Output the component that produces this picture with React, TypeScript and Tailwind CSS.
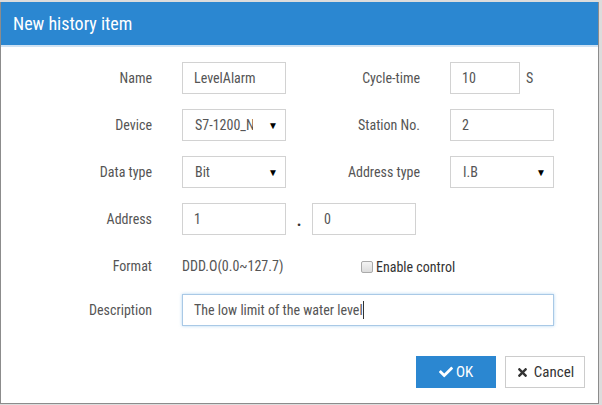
import {FaCheck, FaTimes} from 'react-icons/fa'

const font = "font-['Roboto_Condensed','Roboto','Liberation_Sans',sans-serif]"

function Label({children, w = 'w-[151px]'}: { children: string, w?: string }) {
  return <div className={`${w} shrink-0 text-right text-[14px] text-[#555]`}>{children}</div>
}

function Field({value, w = 'w-[104px]', focused = false}: { value: string, w?: string, focused?: boolean }) {
  return (
    <div className={`${w} h-[32px] shrink-0 flex items-center px-[11px] text-[14px] text-[#555] bg-white border ${focused ? 'border-[#a9c9e6] shadow-[0_0_3px_rgba(102,175,233,0.5)]' : 'border-[#d2d2d2]'}`}>
      {value}
      {focused && <span className="w-px h-[18px] bg-[#333]"/>}
    </div>
  )
}

function Select({value, w = 'w-[104px]'}: { value: string, w?: string }) {
  return (
    <div className={`${w} h-[32px] shrink-0 flex items-center pl-[12px] pr-[7px] text-[14px] text-[#555] bg-white border border-[#d2d2d2]`}>
      <span className="w-[58px] overflow-hidden whitespace-nowrap">{value}</span>
      <span className="flex-1"/>
      <span className="text-[10px] text-black">▼</span>
    </div>
  )
}

export default function App() {
  return (
    <div className={`w-[602px] h-[405px] bg-[#dcdcdc] pt-[2px] ${font}`}>
      <div className="w-[599px] h-[402px] bg-white border border-t-0 border-[#8c8c8c] flex flex-col">
        <div className="h-[43px] bg-[#2b87d1] flex items-center px-[12px] text-[18px] text-white">New history item</div>
        <div className="h-[2px] bg-[#cfe2f3]"/>

        <div className="flex flex-col pt-[15px]">
          <div className="flex items-center h-[32px]">
            <Label>Name</Label>
            <div className="ml-[30px]"><Field value="LevelAlarm"/></div>
            <Label w="w-[134px]">Cycle-time</Label>
            <div className="ml-[30px]"><Field value="10" w="w-[70px]"/></div>
            <span className="ml-[6px] text-[14px] text-[#555]">S</span>
          </div>

          <div className="flex items-center h-[32px] mt-[15px]">
            <Label>Device</Label>
            <div className="ml-[30px]"><Select value="S7-1200_N"/></div>
            <Label w="w-[134px]">Station No.</Label>
            <div className="ml-[30px]"><Field value="2"/></div>
          </div>

          <div className="flex items-center h-[32px] mt-[15px]">
            <Label>Data type</Label>
            <div className="ml-[30px]"><Select value="Bit"/></div>
            <Label w="w-[134px]">Address type</Label>
            <div className="ml-[30px]"><Select value="I.B"/></div>
          </div>

          <div className="flex items-center h-[32px] mt-[15px]">
            <Label>Address</Label>
            <div className="ml-[30px]"><Field value="1"/></div>
            <span className="w-[26px] text-center text-[16px] text-[#333] font-bold pt-[4px]">.</span>
            <Field value="0"/>
          </div>

          <div className="flex items-center h-[32px] mt-[15px]">
            <Label>Format</Label>
            <div className="ml-[30px] w-[104px] text-[14px] text-[#555] whitespace-nowrap">DDD.O(0.0~127.7)</div>
            <div className="ml-[75px] flex items-center gap-[3px] pt-[2px]">
              <span className="w-[12px] h-[12px] rounded-[2px] border border-[#aaa] bg-gradient-to-b from-[#f4f4f4] to-[#dcdcdc]"/>
              <span className="text-[14px] text-[#333]">Enable control</span>
            </div>
          </div>

          <div className="flex items-center h-[32px] mt-[12px]">
            <Label>Description</Label>
            <div className="ml-[30px]"><Field value="The low limit of the water level" w="w-[372px]" focused/></div>
          </div>

          <div className="flex justify-end gap-[9px] mt-[30px] pr-[13px]">
            <button className="w-[80px] h-[32px] bg-[#2b87d1] text-white text-[15px] flex items-center justify-center gap-[3px]">
              <FaCheck className="w-[14px] h-[14px]"/>OK
            </button>
            <button className="w-[80px] h-[32px] bg-white border border-[#ccc] text-[#333] text-[15px] flex items-center justify-center gap-[5px]">
              <FaTimes className="w-[13px] h-[13px]"/>Cancel
            </button>
          </div>
        </div>
      </div>
    </div>
  )
}
